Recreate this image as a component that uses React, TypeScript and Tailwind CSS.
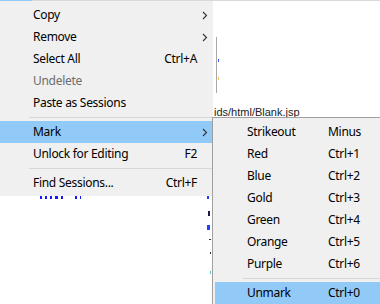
import React from "react";

const font = { fontFamily: '"Noto Sans", "Open Sans", sans-serif' };

function Chevron() {
  return (
    <svg width="6" height="9" viewBox="0 0 6 9" className="absolute left-[202px] top-[7px]">
      <polyline points="1,1 4.5,4.5 1,8" fill="none" stroke="#333" strokeWidth="1.1" />
    </svg>
  );
}

type MainItem =
  | { sep: true }
  | { sep?: false; label: string; shortcut?: string; arrow?: boolean; disabled?: boolean; active?: boolean };

const mainItems: MainItem[] = [
  { label: "Copy", arrow: true },
  { label: "Remove", arrow: true },
  { label: "Select All", shortcut: "Ctrl+A" },
  { label: "Undelete", disabled: true },
  { label: "Paste as Sessions" },
  { sep: true },
  { label: "Mark", arrow: true, active: true },
  { label: "Unlock for Editing", shortcut: "F2" },
  { sep: true },
  { label: "Find Sessions...", shortcut: "Ctrl+F" },
];

const subItems: ({ sep: true } | { sep?: false; label: string; shortcut: string; active?: boolean })[] = [
  { label: "Strikeout", shortcut: "Minus" },
  { label: "Red", shortcut: "Ctrl+1" },
  { label: "Blue", shortcut: "Ctrl+2" },
  { label: "Gold", shortcut: "Ctrl+3" },
  { label: "Green", shortcut: "Ctrl+4" },
  { label: "Orange", shortcut: "Ctrl+5" },
  { label: "Purple", shortcut: "Ctrl+6" },
  { sep: true },
  { label: "Unmark", shortcut: "Ctrl+0", active: true },
];

export default function App() {
  return (
    <div
      className="relative w-[380px] h-[304px] overflow-hidden bg-white text-[12px] tracking-[-0.3px] text-black"
      style={font}
    >
      {/* background window content */}
      <div className="absolute left-0 top-0 w-[380px] h-[1px] bg-[#d9d9d9]" />
      <div className="absolute left-0 top-0 w-[32px] h-[1px] bg-[#91c9f7]" />
      <div className="absolute left-[216px] top-[37px] w-[1px] h-[56px] bg-[#a8a8a8]" />
      <div className="absolute left-[218px] top-[59px] w-[1px] h-[3px] bg-[#3b5bff]" />
      <div className="absolute left-[218px] top-[77px] w-[1px] h-[3px] bg-[#f0c060]" />
      <div
        className="absolute left-[214px] top-[106px] text-[11px] leading-[13px] tracking-normal text-[#222]"
        style={{ fontFamily: '"Liberation Sans", Arial, sans-serif' }}
      >
        ids/html/Blank.jsp
      </div>
      <div className="absolute left-[30px] top-[195px] w-[77px] h-[1px] bg-[#c8c8c8]" />
      <div className="absolute left-[40px] top-[196px] flex gap-[3px]">
        <div className="w-[2px] h-[3px] bg-[#1515ff]" />
        <div className="w-[2px] h-[3px] bg-[#1515ff]" />
        <div className="w-[2px] h-[3px] bg-[#1515ff]" />
        <div className="w-[3px] h-[3px] bg-[#1515ff]" />
        <div className="w-[2px] h-[3px] bg-[#1515ff]" />
        <div className="w-[6px] h-[1px] bg-white" />
        <div className="w-[2px] h-[3px] bg-[#1515ff]" />
        <div className="w-[1px] h-[3px] bg-[#1515ff]" />
      </div>
      <div className="absolute left-[207px] top-[196px] w-[2px] h-[3px] bg-[#2040ff]" />
      <div className="absolute left-[208px] top-[211px] w-[2px] h-[5px] bg-[#1a1a4a]" />
      <div className="absolute left-[207px] top-[225px] w-[3px] h-[5px] bg-[#2040ff]" />
      <div className="absolute left-[209px] top-[239px] w-[2px] h-[1px] bg-[#333]" />
      <div className="absolute left-[210px] top-[252px] w-[1px] h-[2px] bg-[#333]" />
      <div className="absolute left-[210px] top-[271px] w-[1px] h-[3px] bg-[#60c0c0]" />

      {/* main menu */}
      <div className="absolute left-0 top-[1px] w-[213px] bg-[#f0f0f0] pt-[3px] pb-[2px]">
        {mainItems.map((it, i) =>
          it.sep ? (
            <div key={i} className="h-[7px] pl-[29px] flex items-center">
              <div className="h-[1px] w-full bg-[#d7d7d7]" />
            </div>
          ) : (
            <div
              key={i}
              className={`relative h-[22px] flex items-center justify-between pl-[33px] pr-[16px] ${
                it.active ? "bg-[#91c9f7]" : ""
              } ${it.disabled ? "text-[#6d6d6d]" : "text-black"}`}
            >
              <span>{it.label}</span>
              {it.shortcut && <span>{it.shortcut}</span>}
              {it.arrow && <Chevron />}
            </div>
          )
        )}
      </div>

      {/* submenu */}
      <div className="absolute left-[212px] top-[117px] w-[200px] border-l border-t border-[#a0a0a0] bg-[#f0f0f0] pt-[3px] pl-[2px]">
        {subItems.map((it, i) =>
          it.sep ? (
            <div key={i} className="h-[7px] pl-[28px] flex items-center">
              <div className="h-[1px] w-full bg-[#d7d7d7]" />
            </div>
          ) : (
            <div key={i} className={`h-[22px] flex items-center pl-[32px] ${it.active ? "bg-[#91c9f7]" : ""}`}>
              <span className="w-[81px] shrink-0">{it.label}</span>
              <span>{it.shortcut}</span>
            </div>
          )
        )}
      </div>
    </div>
  );
}
